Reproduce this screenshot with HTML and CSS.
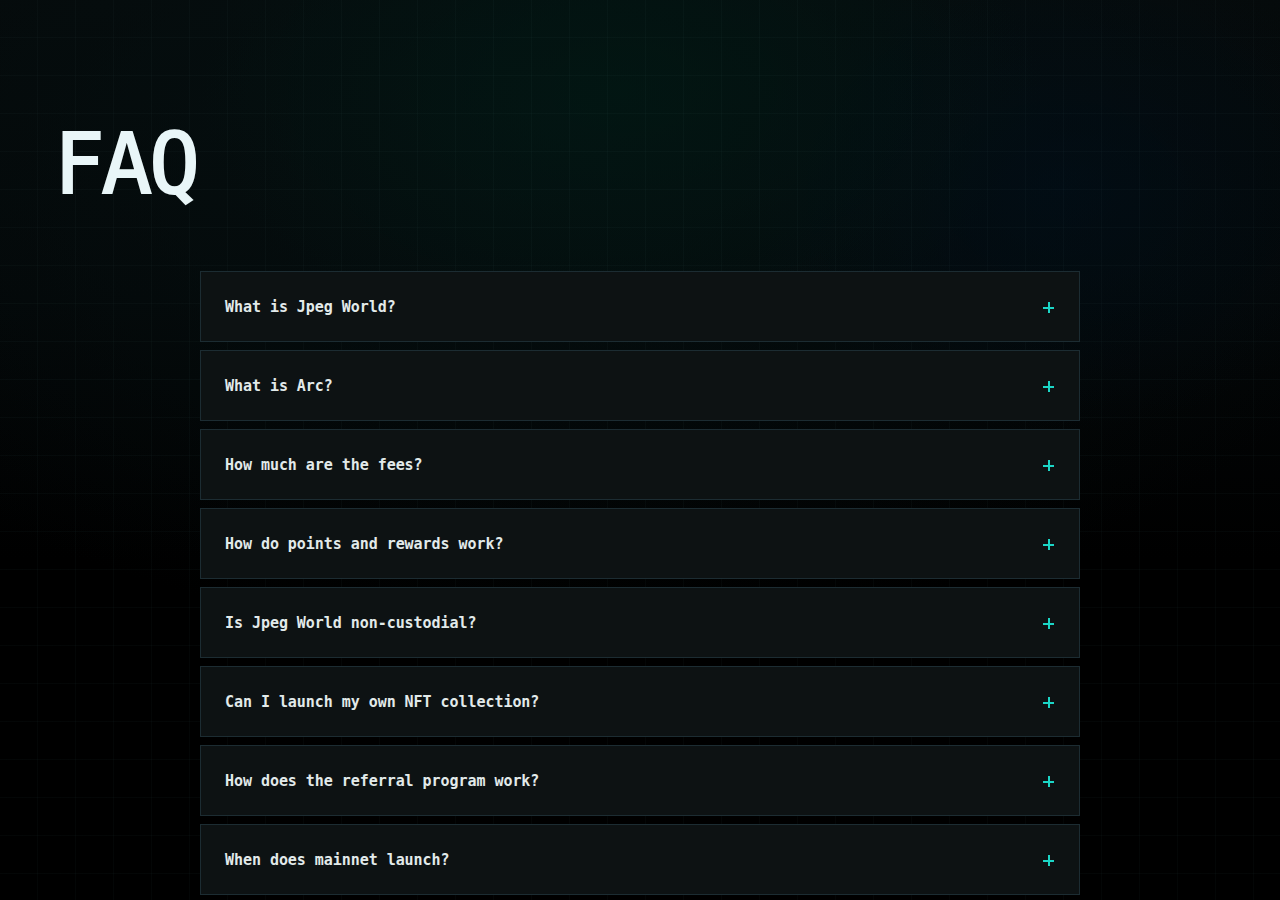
FILE: index.html
```html
<!DOCTYPE html>
<html lang="en">
<head>
<meta charset="utf-8">
<title>FAQ</title>
<link rel="stylesheet" href="styles.css">
</head>
<body>
<main class="page">
  <h1 class="title">FAQ</h1>
  <ul class="faq">
    <li class="item"><span class="q">What is Jpeg World?</span><span class="plus" aria-hidden="true"></span></li>
    <li class="item"><span class="q">What is Arc?</span><span class="plus" aria-hidden="true"></span></li>
    <li class="item"><span class="q">How much are the fees?</span><span class="plus" aria-hidden="true"></span></li>
    <li class="item"><span class="q">How do points and rewards work?</span><span class="plus" aria-hidden="true"></span></li>
    <li class="item"><span class="q">Is Jpeg World non-custodial?</span><span class="plus" aria-hidden="true"></span></li>
    <li class="item"><span class="q">Can I launch my own NFT collection?</span><span class="plus" aria-hidden="true"></span></li>
    <li class="item"><span class="q">How does the referral program work?</span><span class="plus" aria-hidden="true"></span></li>
    <li class="item"><span class="q">When does mainnet launch?</span><span class="plus" aria-hidden="true"></span></li>
  </ul>
</main>
</body>
</html>
```

FILE: styles.css
```css
html, body {
  margin: 0;
  padding: 0;
  height: 100%;
}

body {
  background-color: #000;
  background-image:
    linear-gradient(to right, rgba(70, 110, 110, 0.055) 1px, transparent 1px),
    linear-gradient(to bottom, rgba(70, 110, 110, 0.055) 1px, transparent 1px),
    radial-gradient(ellipse 420px 260px at 620px 90px, rgba(0, 26, 20, 0.6), transparent 100%),
    radial-gradient(ellipse 320px 240px at 1060px 190px, rgba(0, 14, 26, 0.6), transparent 100%),
    radial-gradient(ellipse 900px 520px at 560px 120px, rgba(5, 16, 17, 0.95), transparent 100%),
    linear-gradient(to bottom, #05090a 0px, #030607 300px, #000 560px);
  background-size: 38px 38px, 38px 38px, auto, auto, auto, auto;
  background-position: -1px -1px, -1px -1px, 0 0, 0 0, 0 0, 0 0;
  overflow: hidden;
}

.page {
  padding: 122px 60px 0 54px;
}

.title {
  margin: 0;
  font-family: "DejaVu Sans Mono", "Liberation Mono", monospace;
  font-weight: 400;
  font-size: 84px;
  line-height: 84px;
  letter-spacing: -3px;
  color: #e9f6f8;
  -webkit-text-stroke: 2px #e9f6f8;
}

.faq {
  list-style: none;
  margin: 65px 0 0 146px;
  padding: 0;
  width: 880px;
  display: flex;
  flex-direction: column;
  gap: 8px;
}

.item {
  display: flex;
  align-items: center;
  justify-content: space-between;
  padding: 2px 25px 0 24px;
  box-sizing: content-box;
  height: 67px;
  background: #0d1213;
  border: 1px solid #1c2c32;
}

.q {
  font-family: "DejaVu Sans Mono", "Liberation Mono", monospace;
  font-weight: 700;
  font-size: 15px;
  line-height: 21px;
  color: #e2eaea;
  letter-spacing: -0.05px;
}

.plus {
  position: relative;
  width: 11px;
  height: 11px;
  margin-bottom: 1px;
}

.plus::before,
.plus::after {
  content: "";
  position: absolute;
  background: #1bd6c6;
}

.plus::before {
  left: 0;
  right: 0;
  top: 5px;
  height: 2px;
}

.plus::after {
  top: 0;
  bottom: 0;
  left: 5px;
  width: 2px;
}
```
